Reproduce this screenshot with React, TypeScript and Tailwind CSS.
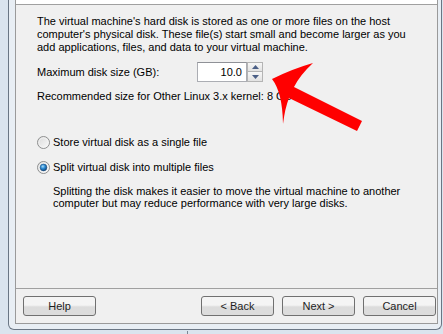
import React from 'react';

const font = { fontFamily: '"Liberation Sans", Arial, sans-serif' };

const Radio = ({ checked }: { checked?: boolean }) => (
  <svg width="13" height="13" viewBox="0 0 13 13" className="shrink-0">
    <defs>
      <linearGradient id="rg" x1="0" y1="0" x2="1" y2="1">
        <stop offset="0" stopColor="#d9d9d9" />
        <stop offset="1" stopColor="#fbfbfb" />
      </linearGradient>
      <radialGradient id="dot" cx="0.4" cy="0.35" r="0.7">
        <stop offset="0" stopColor="#a9dcf6" />
        <stop offset="0.45" stopColor="#2a8ad4" />
        <stop offset="1" stopColor="#0d3d70" />
      </radialGradient>
    </defs>
    <circle cx="6.5" cy="6.5" r="6" fill="url(#rg)" stroke="#8e8f8f" />
    <circle cx="6.5" cy="6.5" r="4.6" fill="none" stroke="#f4f4f4" strokeWidth="0.8" />
    {checked && <circle cx="6.5" cy="6.5" r="3.4" fill="url(#dot)" stroke="#1b4a7a" strokeWidth="0.5" />}
  </svg>
);

const WinButton = ({ label }: { label: string }) => (
  <button className="h-[20px] w-[73px] rounded-[3px] border border-[#707070] bg-gradient-to-b from-[#f4f4f4] from-45% to-[#dcdcdc] to-55% text-[11px] leading-none text-[#1e1e1e]">
    {label}
  </button>
);

const Spinner = () => (
  <div className="flex w-[16px] flex-col">
    <div className="flex h-[10px] items-center justify-center border border-[#b4b4b4] bg-gradient-to-b from-[#f7f7f7] to-[#e2e2e2]">
      <svg width="7" height="4" viewBox="0 0 7 4"><path d="M0 4 L3.5 0 L7 4 Z" fill="#4b5f86" /></svg>
    </div>
    <div className="flex h-[10px] items-center justify-center border border-t-0 border-[#b4b4b4] bg-gradient-to-b from-[#f7f7f7] to-[#e2e2e2]">
      <svg width="7" height="4" viewBox="0 0 7 4"><path d="M0 0 L3.5 4 L7 0 Z" fill="#4b5f86" /></svg>
    </div>
  </div>
);

export default function App() {
  return (
    <div className="relative h-[334px] w-[443px] overflow-hidden bg-[#dae4ee] text-[11px] text-black" style={font}>
      <div className="ml-[8px] h-[330px] w-[434px] rounded-b-[6px] border-x border-b border-[#6a7684] bg-[#e8eef4] pb-[5px] pl-[6px] pr-[3px]">
        <div className="flex h-full flex-col border-x border-b border-[#9a9a9a] bg-[#f0f0f0]">
          <div className="h-[5px] border-b border-[#a0a0a0] bg-white" />

          <div className="flex flex-1 flex-col pl-[21px]">
            <p className="mt-[10px] leading-[13px]">
              The virtual machine's hard disk is stored as one or more files on the host
              <br />
              computer's physical disk. These file(s) start small and become larger as you
              <br />
              add applications, files, and data to your virtual machine.
            </p>

            <div className="mt-[8px] flex h-[20px] items-center">
              <span className="w-[160px]">Maximum disk size (GB):</span>
              <div className="flex h-[20px] w-[50px] items-center justify-end border border-[#abadb3] border-t-[#8f9197] bg-white pr-[4px]">
                10.0
              </div>
              <Spinner />
            </div>

            <p className="mt-[8px] leading-[13px]">Recommended size for Other Linux 3.x kernel: 8 GB</p>

            <label className="mt-[33px] flex h-[13px] items-center gap-[3px]">
              <Radio />
              <span>Store virtual disk as a single file</span>
            </label>

            <label className="mt-[12px] flex h-[13px] items-center gap-[3px]">
              <Radio checked />
              <span>Split virtual disk into multiple files</span>
            </label>

            <p className="mt-[11px] pl-[16px] leading-[12px]">
              Splitting the disk makes it easier to move the virtual machine to another
              <br />
              computer but may reduce performance with very large disks.
            </p>
          </div>

          <div className="flex h-[35px] items-start gap-[8px] border-t border-[#a0a0a0] pl-[7px] pr-[1px] pt-[7px]">
            <WinButton label="Help" />
            <div className="flex-1" />
            <WinButton label="< Back" />
            <WinButton label="Next >" />
            <WinButton label="Cancel" />
          </div>
        </div>
      </div>

      <div className="absolute left-[187px] top-[331px] h-[3px] w-px bg-[#7b8694]" />

      <svg className="pointer-events-none absolute left-0 top-0" width="443" height="334" viewBox="0 0 443 334">
        <path
          d="M272 79 Q292 69 313 63 Q300 75 294 87 L362 121 L357 131 L289 98 Q285 108 283 124 Q282.5 92.5 272 79 Z"
          fill="#ff0000"
        />
      </svg>
    </div>
  );
}
